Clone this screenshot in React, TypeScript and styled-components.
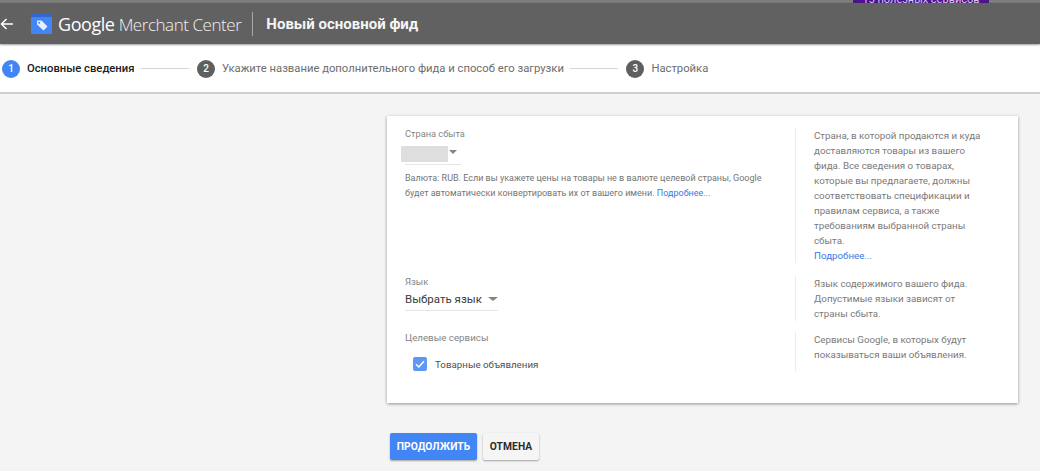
import * as React from 'react';
import styled, { createGlobalStyle } from 'styled-components';

const GlobalStyle = createGlobalStyle`
  html, body {
    margin: 0;
    padding: 0;
    height: 471px;
    overflow: hidden;
    background: #f4f4f4;
    font-family: Roboto, "Liberation Sans", sans-serif;
  }
`;

const Page = styled.div`
  width: 1040px;
  height: 471px;
  overflow: hidden;
`;

const TopStrip = styled.div`
  height: 3px;
  background: #7c7c7c;
  padding-left: 853px;
  overflow: hidden;
`;

const PromoBadge = styled.div`
  width: 136px;
  height: 3px;
  background: #4a148c;
  color: #d9c8ee;
  font-size: 11px;
  line-height: 0;
  text-align: center;
  white-space: nowrap;
  overflow: hidden;
`;

const Header = styled.header`
  height: 41px;
  background: #616161;
  display: flex;
  align-items: center;
  box-shadow: 0 1px 2px rgba(0, 0, 0, 0.35);
  position: relative;
`;

const BackButton = styled.svg`
  width: 14px;
  height: 14px;
  margin-right: 17px;
  flex: none;
`;

const Logo = styled.svg`
  width: 21px;
  height: 21px;
  flex: none;
  margin-right: 6px;
`;

const Wordmark = styled.div`
  font-family: "Open Sans", Roboto, sans-serif;
  color: #f1f1f1;
  white-space: nowrap;
`;

const WordmarkStrong = styled.span`
  font-size: 18px;
  letter-spacing: -0.45px;
  font-weight: 400;
  color: #fff;
`;

const WordmarkLight = styled.span`
  font-size: 17px;
  letter-spacing: -0.45px;
  font-weight: 300;
`;

const HeaderDivider = styled.div`
  width: 1px;
  height: 24px;
  background: #a9a9a9;
  margin: 0 13px 0 11px;
`;

const HeaderTitle = styled.div`
  font-size: 15px;
  font-weight: 700;
  color: #f5f5f5;
`;

const Stepper = styled.nav`
  height: 47px;
  margin-top: 1px;
  background: #fff;
  border-bottom: 2px solid #cfcfcf;
  display: flex;
  align-items: center;
  padding-left: 2px;
`;

const StepCircle = styled.div<{ $active?: boolean }>`
  width: 18px;
  height: 18px;
  border-radius: 50%;
  background: ${(p) => (p.$active ? '#4285f4' : '#5f5f5f')};
  color: #fff;
  font-size: 10px;
  font-weight: 500;
  display: flex;
  align-items: center;
  justify-content: center;
  flex: none;
`;

const StepLabel = styled.div<{ $active?: boolean }>`
  font-size: 11.25px;
  margin-left: 7px;
  white-space: nowrap;
  color: ${(p) => (p.$active ? '#202020' : '#6e6e6e')};
  font-weight: ${(p) => (p.$active ? 500 : 400)};
`;

const StepLine = styled.div`
  width: 48px;
  height: 1px;
  background: #d6d6d6;
  margin: 0 8px 0 6.5px;
  flex: none;
`;

const Main = styled.main`
  padding: 22px 22px 0 387px;
`;

const Card = styled.section`
  width: 631px;
  height: 287px;
  box-sizing: border-box;
  background: #fff;
  box-shadow: 0 1px 3px rgba(0, 0, 0, 0.4);
  padding-top: 12px;
`;

const Row = styled.div<{ $height: number; $gap: number }>`
  display: grid;
  grid-template-columns: 408px 223px;
  height: ${(p) => p.$height}px;
  margin-bottom: ${(p) => p.$gap}px;
`;

const Field = styled.div`
  padding-left: 18px;
`;

const FieldLabel = styled.div<{ $size: number }>`
  font-size: ${(p) => p.$size}px;
  line-height: 12px;
  color: #858585;
`;

const CountrySelect = styled.div`
  width: 56px;
  height: 18px;
  margin-top: 6px;
  border-bottom: 1px solid #e6e6e6;
  display: flex;
  align-items: flex-start;
`;

const BlurredValue = styled.div`
  width: 47px;
  height: 16px;
  margin-left: -4px;
  background: #dedede;
  filter: blur(0.5px);
  flex: none;
`;

const Caret = styled.div<{ $wide?: boolean }>`
  width: 0;
  height: 0;
  border-left: ${(p) => (p.$wide ? 5 : 4)}px solid transparent;
  border-right: ${(p) => (p.$wide ? 5 : 4)}px solid transparent;
  border-top: 4px solid #858585;
  margin-left: ${(p) => (p.$wide ? 6 : 1)}px;
  margin-top: ${(p) => (p.$wide ? 0 : 4)}px;
  flex: none;
`;

const FieldNote = styled.p`
  font-size: 9px;
  line-height: 15px;
  color: #757575;
  margin: 6px 0 0;
  width: 362px;
`;

const LanguageSelect = styled.div`
  width: 93px;
  height: 22px;
  border-bottom: 1px solid #e6e6e6;
  display: flex;
  align-items: center;
  font-size: 11.5px;
  color: #3c3c3c;
  white-space: nowrap;
`;

const CheckRow = styled.label`
  display: flex;
  align-items: center;
  margin: 13px 0 0 8px;
  font-size: 9.75px;
  color: #505050;
`;

const CheckBox = styled.span`
  width: 14px;
  height: 14px;
  border-radius: 2px;
  background: #5e97f6;
  margin-right: 8px;
  display: flex;
  align-items: center;
  justify-content: center;
  flex: none;
`;

const Help = styled.aside`
  border-left: 1px solid #ececec;
  padding-left: 18px;
  font-size: 9.75px;
  line-height: 15px;
  color: #7a7a7a;
  width: 170px;
`;

const HelpLink = styled.a`
  display: block;
  color: #3b78e7;
`;

const InlineLink = styled.a`
  color: #3b78e7;
`;

const Actions = styled.div`
  display: flex;
  gap: 6px;
  margin: 30px 0 0 3px;
`;

const Button = styled.button<{ $primary?: boolean }>`
  height: 27px;
  padding: 0;
  width: ${(p) => (p.$primary ? 87 : 56)}px;
  border: 0;
  border-radius: 2px;
  font-family: Roboto, sans-serif;
  font-size: 10.25px;
  font-weight: 700;
  letter-spacing: 0.1px;
  text-transform: uppercase;
  color: ${(p) => (p.$primary ? '#fff' : '#2b2b2b')};
  background: ${(p) => (p.$primary ? '#4285f4' : '#f5f5f5')};
  box-shadow: 0 1px 2px rgba(0, 0, 0, 0.35);
`;

const steps = [
  { label: 'Основные сведения', active: true },
  { label: 'Укажите название дополнительного фида и способ его загрузки' },
  { label: 'Настройка' },
];

export default function App() {
  return (
    <Page>
      <GlobalStyle />
      <TopStrip>
        <PromoBadge>15 полезных сервисов</PromoBadge>
      </TopStrip>
      <Header>
        <BackButton viewBox="0 0 14 14" fill="none" stroke="#fff" strokeWidth="1.5">
          <path d="M13 7H1.5M6.5 2 1.5 7l5 5" />
        </BackButton>
        <Logo viewBox="0 0 21 21">
          <rect width="21" height="21" rx="1" fill="#4285f4" />
          <rect width="21" height="4" fill="#3367c9" />
          <path d="M6 7.500h4.500l6 6-4 4-6.500-6z" fill="#e8eefc" />
          <circle cx="8.200" cy="9.700" r="1" fill="#4285f4" />
        </Logo>
        <Wordmark>
          <WordmarkStrong>Google</WordmarkStrong> <WordmarkLight>Merchant Center</WordmarkLight>
        </Wordmark>
        <HeaderDivider />
        <HeaderTitle>Новый основной фид</HeaderTitle>
      </Header>
      <Stepper>
        {steps.map((step, i) => (
          <React.Fragment key={step.label}>
            <StepCircle $active={step.active}>{i + 1}</StepCircle>
            <StepLabel $active={step.active}>{step.label}</StepLabel>
            {i < steps.length - 1 && <StepLine />}
          </React.Fragment>
        ))}
      </Stepper>
      <Main>
        <Card>
          <Row $height={135} $gap={13}>
            <Field>
              <FieldLabel $size={9.25}>Страна сбыта</FieldLabel>
              <CountrySelect>
                <BlurredValue />
                <Caret />
              </CountrySelect>
              <FieldNote>
                Валюта: RUB. Если вы укажете цены на товары не в валюте целевой страны, Google будет
                автоматически конвертировать их от вашего имени.{' '}
                <InlineLink>Подробнее...</InlineLink>
              </FieldNote>
            </Field>
            <Help>
              Страна, в которой продаются и куда доставляются товары из вашего фида. Все сведения о
              товарах, которые вы предлагаете, должны соответствовать спецификации и правилам
              сервиса, а также требованиям выбранной страны сбыта.
              <HelpLink>Подробнее...</HelpLink>
            </Help>
          </Row>
          <Row $height={44} $gap={12}>
            <Field>
              <FieldLabel $size={9.5}>Язык</FieldLabel>
              <LanguageSelect>
                Выбрать язык
                <Caret $wide />
              </LanguageSelect>
            </Field>
            <Help>Язык содержимого вашего фида. Допустимые языки зависят от страны сбыта.</Help>
          </Row>
          <Row $height={30} $gap={0}>
            <Field>
              <FieldLabel $size={9.75}>Целевые сервисы</FieldLabel>
              <CheckRow>
                <CheckBox>
                  <svg width="12" height="12" viewBox="0 0 12 12" fill="none" stroke="#fff" strokeWidth="1.5">
                    <path d="M2 6.200 4.800 9 10 3.200" />
                  </svg>
                </CheckBox>
                Товарные объявления
              </CheckRow>
            </Field>
            <Help>Сервисы Google, в которых будут показываться ваши объявления.</Help>
          </Row>
        </Card>
        <Actions>
          <Button $primary>Продолжить</Button>
          <Button>Отмена</Button>
        </Actions>
      </Main>
    </Page>
  );
}
